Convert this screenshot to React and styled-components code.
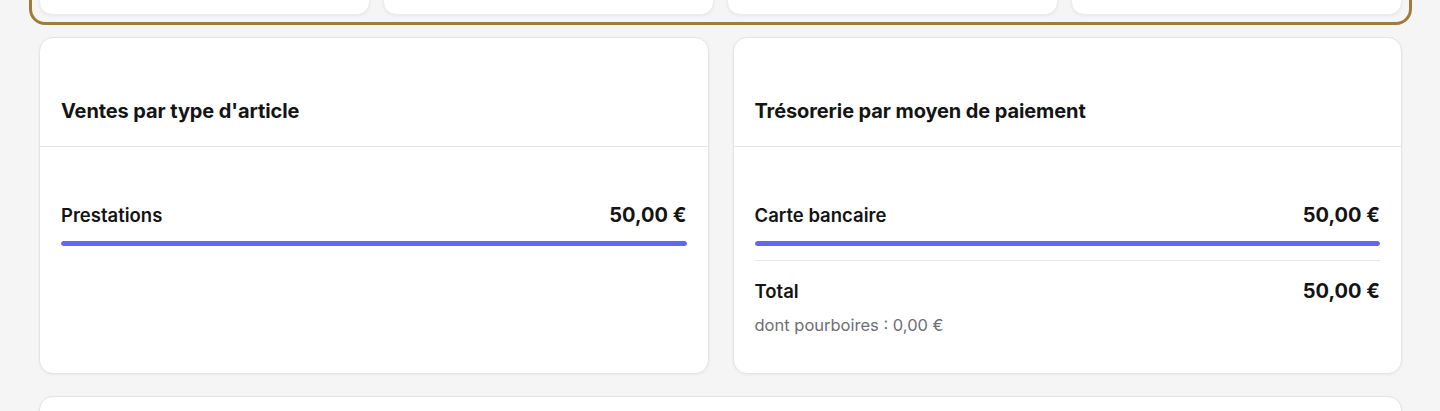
import React from 'react'
import styled, { createGlobalStyle } from 'styled-components'

const GlobalStyle = createGlobalStyle`
  html, body {
    margin: 0;
    padding: 0;
    background: #f5f5f5;
    font-family: Inter, "Noto Sans", sans-serif;
    color: #111111;
  }
  * { box-sizing: border-box; }
`

const Page = styled.div`
  padding: 0 38px 40px 39px;
  margin-top: -95px;
  display: flex;
  flex-direction: column;
  gap: 12px;
`

const Highlight = styled.div`
  margin: 0 -10px;
  border: 3px solid #a27b3a;
  border-radius: 16px;
  padding: 7px;
  display: grid;
  grid-template-columns: repeat(4, 1fr);
  gap: 13px;
`

const StatCard = styled.div`
  height: 100px;
  background: #ffffff;
  border-radius: 13px;
  border: 1px solid #ececec;
  box-shadow: 0 1px 3px rgba(0, 0, 0, 0.06);
`

const Grid = styled.div`
  display: grid;
  grid-template-columns: 1fr 1fr;
  gap: 22px 24px;
`

const Card = styled.section`
  background: #ffffff;
  border: 1px solid #e4e4e7;
  border-radius: 14px;
  box-shadow: 0 1px 3px rgba(0, 0, 0, 0.05);
  grid-column: ${props => (props.$wide ? '1 / -1' : 'auto')};
  min-height: ${props => props.$minHeight ?? 'auto'};
`

const CardHeader = styled.header`
  padding: 59px 21px 21px;
  border-bottom: 1px solid #e6e6e6;
`

const Title = styled.h2`
  margin: 0;
  font-size: 20px;
  line-height: 28px;
  font-weight: 700;
  letter-spacing: -0.1px;
  color: #141414;
`

const CardBody = styled.div`
  padding: 56px 21px 38px;
  display: flex;
  flex-direction: column;
`

const Row = styled.div`
  display: flex;
  align-items: center;
  justify-content: space-between;
  height: 24px;
`

const Label = styled.span`
  font-size: 18.5px;
  font-weight: 600;
  color: #141414;
`

const Amount = styled.span`
  font-size: 20px;
  font-weight: 700;
  color: #141414;
`

const Bar = styled.div`
  margin-top: 14px;
  height: 5px;
  border-radius: 3px;
  background: #eef0ff;
  overflow: hidden;
`

const BarFill = styled.div`
  height: 100%;
  background: #6366f1;
  border-radius: 3px;
`

const Divider = styled.hr`
  margin: 14px 0 18px;
  border: 0;
  border-top: 1px solid #e6e6e6;
`

const Note = styled.p`
  margin: 12px 0 0;
  font-size: 16.5px;
  line-height: 20px;
  color: #6e6e76;
`

const sales = [{ label: 'Prestations', amount: '50,00 €', share: 100 }]
const payments = [{ label: 'Carte bancaire', amount: '50,00 €', share: 100 }]

const BreakdownRow = ({ item }) => (
  <>
    <Row>
      <Label>{item.label}</Label>
      <Amount>{item.amount}</Amount>
    </Row>
    <Bar>
      <BarFill style={{ width: `${item.share}%` }} />
    </Bar>
  </>
)

const App = () => {
  return (
    <>
      <GlobalStyle />
      <Page>
        <Highlight>
          <StatCard />
          <StatCard />
          <StatCard />
          <StatCard />
        </Highlight>
        <Grid>
          <Card>
            <CardHeader>
              <Title>Ventes par type d'article</Title>
            </CardHeader>
            <CardBody>
              {sales.map((item, index) => (
                <BreakdownRow key={index} item={item} />
              ))}
            </CardBody>
          </Card>
          <Card>
            <CardHeader>
              <Title>Trésorerie par moyen de paiement</Title>
            </CardHeader>
            <CardBody>
              {payments.map((item, index) => (
                <BreakdownRow key={index} item={item} />
              ))}
              <Divider />
              <Row>
                <Label>Total</Label>
                <Amount>50,00 €</Amount>
              </Row>
              <Note>dont pourboires : 0,00 €</Note>
            </CardBody>
          </Card>
          <Card $wide $minHeight="200px" />
        </Grid>
      </Page>
    </>
  )
}

export default App
